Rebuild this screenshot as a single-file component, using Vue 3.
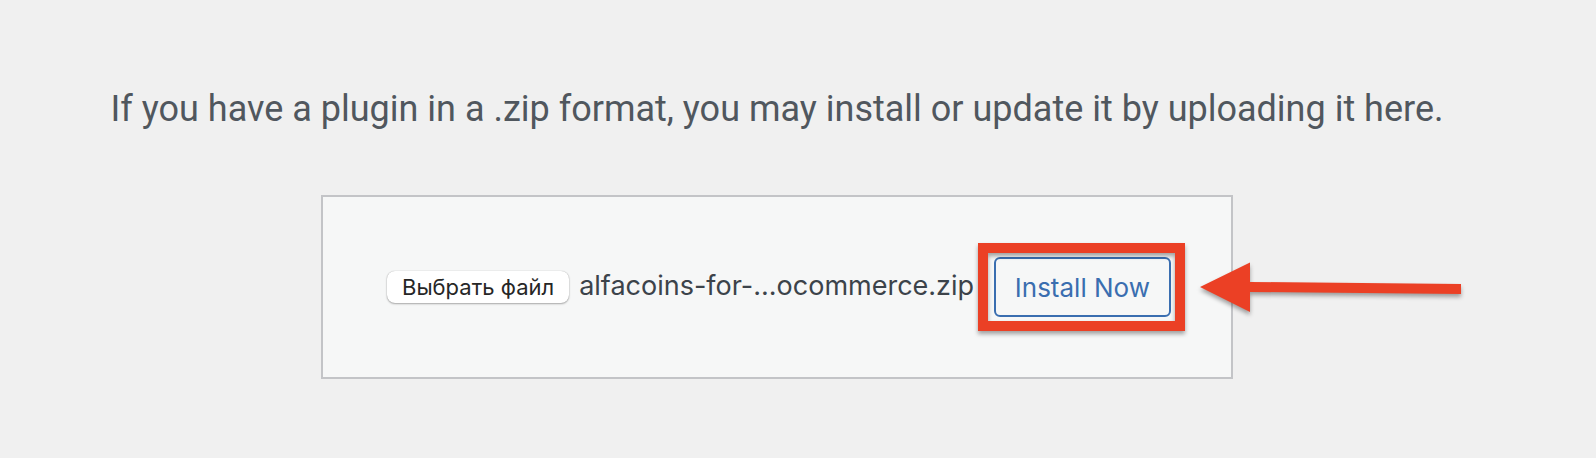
<script setup>
import { ref } from 'vue';

const fileName = ref('alfacoins-for-...ocommerce.zip');

const onFileChange = (event) => {
  const file = event.target.files[0];
  if (file) {
    fileName.value = file.name;
  }
};
</script>

<template>
  <main class="upload-plugin">
    <p class="install-help">If you have a plugin in a .zip format, you may install or update it by uploading it here.</p>

    <form class="upload-form" @submit.prevent>
      <div class="file-field">
        <input id="pluginzip" class="file-input" type="file" accept=".zip" @change="onFileChange" />
        <label class="file-button" for="pluginzip">Выбрать файл</label>
        <span class="file-name">{{ fileName }}</span>
      </div>

      <div class="install-action">
        <button class="install-button" type="submit">Install Now</button>
        <span class="highlight"></span>
        <svg class="arrow" width="264" height="52" viewBox="0 0 264 52" aria-hidden="true">
          <path d="M0 26 L50 1.5 V21 L261 23 V33 L50 31 V51 Z" fill="#eb4025" />
        </svg>
      </div>
    </form>
  </main>
</template>

<style>
body {
  margin: 0;
  background: #f0f0f0;
}
</style>

<style scoped>
.upload-plugin {
  box-sizing: border-box;
  padding: 81px 42px 78px 0;
  font-family: Inter, "Liberation Sans", sans-serif;
}

.install-help {
  margin: 0 0 58px;
  color: #50575e;
  font-family: Roboto, "Liberation Sans", sans-serif;
  font-size: 36px;
  line-height: 56px;
  text-align: center;
}

.upload-form {
  box-sizing: border-box;
  display: flex;
  align-items: center;
  justify-content: space-between;
  max-width: 912px;
  margin: 0 auto;
  padding: 60px 60px 60px 64px;
  border: 2px solid #c3c4c7;
  background: #f6f7f7;
}

.file-field {
  display: flex;
  align-items: baseline;
  gap: 10px;
  padding-bottom: 2px;
}

.file-input {
  position: absolute;
  width: 1px;
  height: 1px;
  opacity: 0;
}

.file-button {
  padding: 0 15px;
  border-radius: 8px;
  background: #fff;
  box-shadow: 0 0 1px rgba(0, 0, 0, 0.3), 0 1px 2px rgba(0, 0, 0, 0.3);
  color: #262626;
  font-size: 22px;
  line-height: 32px;
  cursor: pointer;
}

.file-name {
  color: #3c434a;
  font-size: 27px;
  line-height: 36px;
  white-space: nowrap;
}

.install-action {
  position: relative;
}

.install-button {
  display: block;
  height: 60px;
  padding: 0 19px;
  border: 2px solid #3a6eb0;
  border-radius: 6px;
  background: #f6f7f7;
  color: #3a6eb0;
  font-family: inherit;
  font-size: 26px;
  white-space: nowrap;
  cursor: pointer;
}

/* callout drawn around and beside the button */
.highlight {
  position: absolute;
  inset: -14px -14px -14px -16px;
  border: 10px solid #eb4025;
  filter: drop-shadow(0 3px 2px rgba(0, 0, 0, 0.35));
  pointer-events: none;
}

.arrow {
  position: absolute;
  top: 4px;
  left: calc(100% + 29px);
  overflow: visible;
  filter: drop-shadow(0 3px 2px rgba(0, 0, 0, 0.35));
  pointer-events: none;
}
</style>
